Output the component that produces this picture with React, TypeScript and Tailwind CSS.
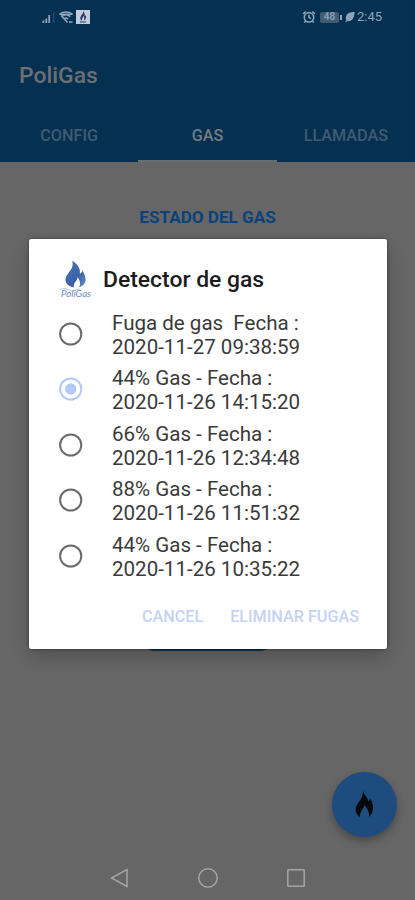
import {ReactNode} from 'react'

type Reading = {
  label: string
  date: string
}

const readings: Reading[] = [
  {label: 'Fuga de gas  Fecha :', date: '2020-11-27 09:38:59'},
  {label: '44% Gas - Fecha :', date: '2020-11-26 14:15:20'},
  {label: '66% Gas - Fecha :', date: '2020-11-26 12:34:48'},
  {label: '88% Gas - Fecha :', date: '2020-11-26 11:51:32'},
  {label: '44% Gas - Fecha :', date: '2020-11-26 10:35:22'}
]

const tabs = ['CONFIG', 'GAS', 'LLAMADAS']

const StatusBar = () => {
  return (
    <div className="flex h-[34px] items-center justify-between pl-[42px] pr-[33px] text-[#8fa3b8]">
      <div className="flex items-center">
        <svg width="14" height="14" viewBox="0 0 14 14" fill="currentColor">
          <path d="M.5 10.5h1.8V13H.5zM3.4 8.5h1.8V13H3.4zM6.3 5h1.8v8H6.3z" />
          <path d="M11.2 2h1.2v11h-1.2z" opacity=".3" />
        </svg>
        <svg className="ml-[2px]" width="16" height="14" viewBox="0 0 16 14" fill="none" stroke="currentColor" strokeWidth="1.5">
          <path d="M1.5 4.2C5 1.2 11 1.2 14.5 4.2M3.6 6.6c2.6-2.1 6.2-2.1 8.8 0M5.8 9c1.4-1.1 3-1.1 4.4 0" />
          <path d="M1.5 4.2h13M3 5.5l6.5 7M11 12h3.5" />
        </svg>
        <div className="ml-[2px] flex h-[14px] w-[14px] items-center justify-center bg-[#c3cbdc]">
          <svg width="8" height="12" viewBox="0 0 8 12" fill="#263b68">
            <path d="M4.2 0c.7 2-1 2.8-2.2 4.9C.5 7.5 1.5 9 3 9.5 2.4 7.5 4.3 6.5 4.5 4.7 5.7 6.5 5.5 8 4.8 9.5 7.6 8.3 7.5 5.7 6.4 4.1 6.2 5 5.9 5.2 5.6 5.4 5.9 3.3 5.4 1.2 4.2 0zM1 10.6h6v.8H1z" />
          </svg>
        </div>
      </div>
      <div className="flex items-center">
        <svg width="14" height="14" viewBox="0 0 14 14" fill="none" stroke="currentColor" strokeWidth="1.6">
          <circle cx="7" cy="7.3" r="4.7" />
          <path d="M7 4.8v2.8l2 1M1.2 3.8l2.5-2.3M12.8 3.8l-2.5-2.3M3.5 11l-1.2 1.6M10.5 11l1.2 1.6" />
        </svg>
        <div className="ml-[4px] flex h-[11px] w-[19px] items-center justify-center rounded-[2px] bg-[#425c76] text-[10px] leading-none font-medium">
          48
        </div>
        <div className="ml-px h-[5px] w-[2px] bg-[#8fa3b8]" />
        <svg className="ml-[3px]" width="10" height="12" viewBox="0 0 10 12" fill="currentColor">
          <path d="M9.5 1C4 1 .8 3 .8 7c0 .9.2 1.5.5 2L.3 10.8l.9.5 1-1.3C7 11 9.5 7 9.5 1z" />
        </svg>
        <span className="ml-[2px] text-[13px]">2:45</span>
      </div>
    </div>
  )
}

const PoliGasLogo = () => {
  return (
    <svg width="34" height="42" viewBox="0 0 34 42">
      <defs>
        <linearGradient id="flame" x1="0" y1="0" x2="1" y2="1">
          <stop offset="0" stopColor="#4c78b7" />
          <stop offset=".6" stopColor="#3b62a8" />
          <stop offset="1" stopColor="#6b8fc8" />
        </linearGradient>
      </defs>
      <path
        d="M14.2 1.5C21 6 22.5 11 21.8 15c1.5-.8 2.2-2 2.5-3.5C29 19 29.5 25 21 28.500c2-3.500 1.200-7-1.500-10.500.5 4-4.500 5-3.500 10.500C8 27 5.500 21.500 9 16c3.500-5 7-8 5.200-14.500z"
        fill="url(#flame)"
      />
      <path d="M1.5 31c3-2 8-1.5 11 .5s7-2.5 10-1" fill="none" stroke="#9db2d8" strokeWidth=".8" />
      <text x="3" y="38" fill="#6f8bc0" fontSize="9.5" fontStyle="italic" fontFamily="Lato, sans-serif" textLength="30" lengthAdjust="spacingAndGlyphs">
        PoliGas
      </text>
    </svg>
  )
}

const Radio = ({checked}: {checked: boolean}) => {
  return (
    <svg width="24" height="24" viewBox="0 0 24 24" fill="none" className={checked ? 'text-[#b3c9fa]' : 'text-[#6b6b6b]'}>
      <circle cx="11.7" cy="12" r="10.6" stroke="currentColor" strokeWidth="2" />
      {checked && <circle cx="11.7" cy="12" r="5.7" fill="currentColor" />}
    </svg>
  )
}

const Dialog = () => {
  return (
    <div className="absolute top-[239px] left-[29px] flex h-[410px] w-[358px] flex-col rounded-[2px] bg-white shadow-[0_8px_18px_rgba(0,0,0,0.2),0_0_3px_rgba(0,0,0,0.5)]">
      <div className="flex h-[69px] items-end pb-[7px] pl-[29px]">
        <PoliGasLogo />
        <h2 className="ml-[11px] pb-[6px] text-[22.9px] leading-[30px] font-medium text-[#1c1c1c]">Detector de gas</h2>
      </div>
      <ul className="-mt-[1.6px]">
        {readings.map((reading: Reading, index: number): ReactNode => {
          return (
            <li key={index} className="flex h-[55.4px] items-center pl-[30px]">
              <Radio checked={index === 1} />
              <p className="ml-[29px] pt-[2px] text-[20.55px] leading-[24px] whitespace-pre text-[#3a3a3a]">
                {reading.label}
                <br />
                {reading.date}
              </p>
            </li>
          )
        })}
      </ul>
      <div className="mt-auto flex h-[64px] items-center justify-end gap-[27px] pr-[28px] text-[16.2px] font-medium text-[#c3d3f5]">
        <button>CANCEL</button>
        <button>ELIMINAR FUGAS</button>
      </div>
    </div>
  )
}

const App = () => {
  return (
    <div className="relative flex h-[900px] w-[415px] flex-col overflow-hidden bg-[#666] font-['Roboto',sans-serif]">
      <header className="flex h-[162px] flex-col bg-[#043052]">
        <StatusBar />
        <h1 className="pt-[26px] pl-[19px] text-[22.9px] leading-[32px] font-medium text-[#6b7075]">PoliGas</h1>
        <nav className="mt-auto flex h-[54px]">
          {tabs.map((tab: string): ReactNode => {
            return (
              <div
                key={tab}
                className={
                  tab === 'GAS'
                    ? 'flex flex-1 items-center justify-center border-b-2 border-[#696d71] pt-[4px] text-[16.2px] font-medium text-[#777b80]'
                    : 'flex flex-1 items-center justify-center border-b-2 border-transparent pt-[4px] text-[16.2px] font-medium text-[#415b72]'
                }
              >
                {tab}
              </div>
            )
          })}
        </nav>
      </header>
      <main className="flex flex-1 flex-col items-center">
        <h2 className="mt-[44px] text-[17.1px] leading-[22px] font-bold text-[#0a427c]">ESTADO DEL GAS</h2>
        <div className="mt-[382px] h-[41px] w-[137px] rounded-[16px] bg-[#0d3656]" />
        <button className="mt-auto mr-[18px] mb-[19px] flex h-[65px] w-[65px] items-center justify-center self-end rounded-full bg-[#1e4c7e] pb-[2px] shadow-[0_4px_8px_rgba(0,0,0,0.3)]">
          <svg width="19" height="28" viewBox="0 0 19 28" fill="#050709">
            <path d="M8 0c.5 4.5 4.5 7 5.5 11.5 1-.8 1.3-1.8 1.5-3 4 6 4.5 12-.8 18.5.3-4-1.2-8-4.7-12C9 19 4.5 21 5 27-1.500 22 .5 17 3.500 12.500 6 8.500 8.500 5.500 8 0z" />
          </svg>
        </button>
      </main>
      <footer className="flex h-[44px] items-center justify-center gap-[68px] pr-[1px] text-[#a5a5a5]">
        <svg width="20" height="22" viewBox="0 0 20 22" fill="none" stroke="currentColor" strokeWidth="1.5">
          <path d="M18 2.5v17L2.5 11z" />
        </svg>
        <svg width="22" height="22" viewBox="0 0 22 22" fill="none" stroke="currentColor" strokeWidth="1.5">
          <circle cx="11" cy="11" r="9.2" />
        </svg>
        <svg width="18" height="18" viewBox="0 0 18 18" fill="none" stroke="currentColor" strokeWidth="1.5">
          <rect x=".8" y=".8" width="16.4" height="16.4" rx=".5" />
        </svg>
      </footer>
      <Dialog />
    </div>
  )
}

export default App
